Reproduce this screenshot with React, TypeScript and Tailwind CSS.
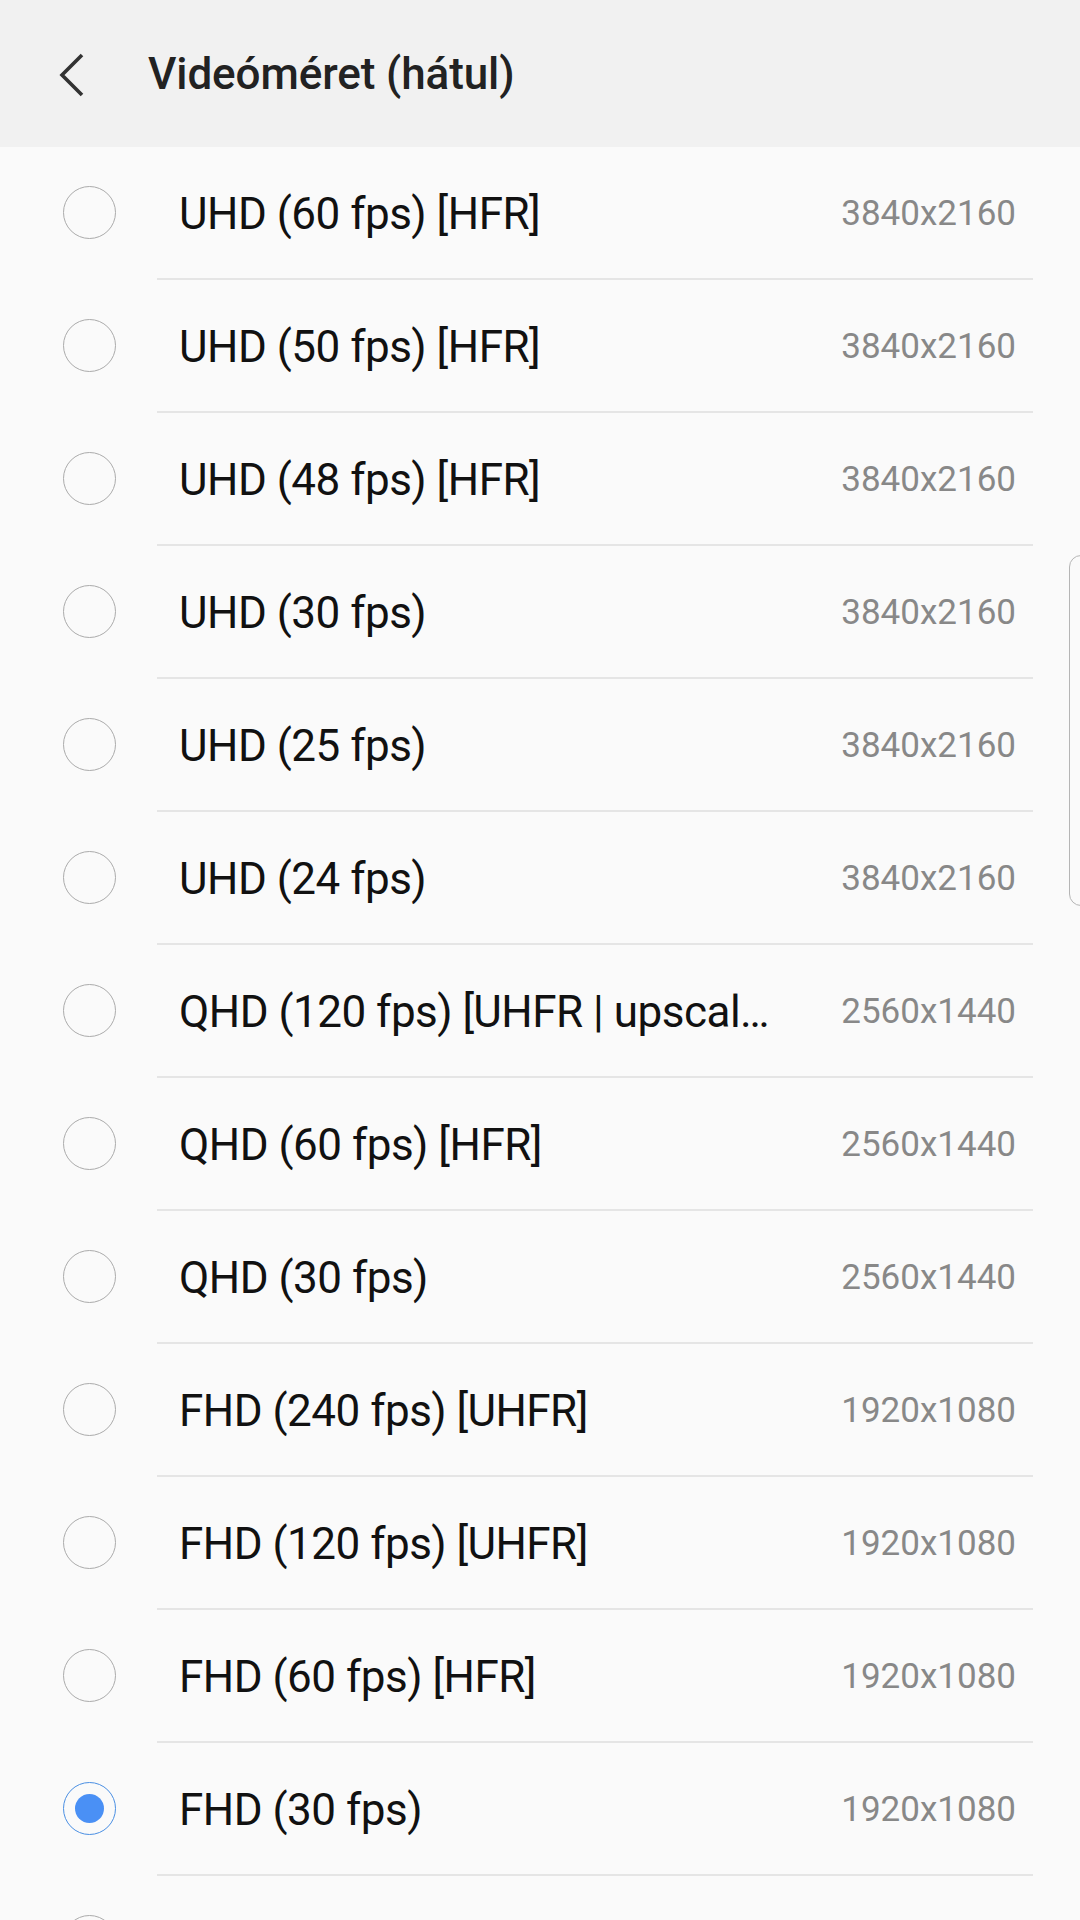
const options = [
    { label: "UHD (60 fps) [HFR]", res: "3840x2160" },
    { label: "UHD (50 fps) [HFR]", res: "3840x2160" },
    { label: "UHD (48 fps) [HFR]", res: "3840x2160" },
    { label: "UHD (30 fps)", res: "3840x2160" },
    { label: "UHD (25 fps)", res: "3840x2160" },
    { label: "UHD (24 fps)", res: "3840x2160" },
    { label: "QHD (120 fps) [UHFR | upscal…", res: "2560x1440" },
    { label: "QHD (60 fps) [HFR]", res: "2560x1440" },
    { label: "QHD (30 fps)", res: "2560x1440" },
    { label: "FHD (240 fps) [UHFR]", res: "1920x1080" },
    { label: "FHD (120 fps) [UHFR]", res: "1920x1080" },
    { label: "FHD (60 fps) [HFR]", res: "1920x1080" },
    { label: "FHD (30 fps)", res: "1920x1080", selected: true },
    // next row only peeks in at the bottom edge
    { label: "", res: "" },
]

const Radio = ({ checked }: { checked?: boolean }) => (
    <div
        className={
            checked
                ? "w-[53px] h-[53px] rounded-full border-[1.5px] border-[#4a8fe3] flex items-center justify-center"
                : "w-[53px] h-[53px] rounded-full border-[1.5px] border-[#ababab]"
        }
    >
        {checked && <div className="w-[29px] h-[29px] rounded-full bg-[#4a90f5]" />}
    </div>
)

const App = () => {
    return (
        <div
            className="w-[1080px] h-[1920px] overflow-hidden bg-[#fafafa] relative"
            style={{ fontFamily: "Roboto, 'Noto Sans', sans-serif" }}
        >
            <header className="h-[147px] bg-[#f1f1f1] flex items-center">
                <svg width="36" height="48" viewBox="0 0 36 48" className="ml-[53px] mr-[59px] mt-[2px]">
                    <polyline
                        points="29,4 9,24 29,44"
                        fill="none"
                        stroke="#333"
                        strokeWidth="3.6"
                    />
                </svg>
                <h1 className="text-[44px] font-medium text-[#222] tracking-[-0.1px]">Videóméret (hátul)</h1>
            </header>

            <div className="flex flex-col">
                {options.map((o, i) => (
                    <div key={i} className="flex h-[133px]">
                        <div className="w-[157px] pl-[63px] flex items-center pb-[2px]">
                            <Radio checked={o.selected} />
                        </div>
                        <div className="flex-1 mr-[47px] flex items-center justify-between border-b-2 border-[#e5e5e5]">
                            <span className="pl-[22px] pt-[2px] text-[44px] text-[#111] tracking-[-0.5px] whitespace-nowrap">
                                {o.label}
                            </span>
                            <span className="pr-[17px] pt-[4px] text-[35px] text-[#888]">{o.res}</span>
                        </div>
                    </div>
                ))}
            </div>

            <div className="absolute left-[1069px] top-[555px] w-[30px] h-[351px] rounded-[12px] border-[1.5px] border-[#b5b5b5] bg-[#fafafa]" />
        </div>
    )
}

export default App
